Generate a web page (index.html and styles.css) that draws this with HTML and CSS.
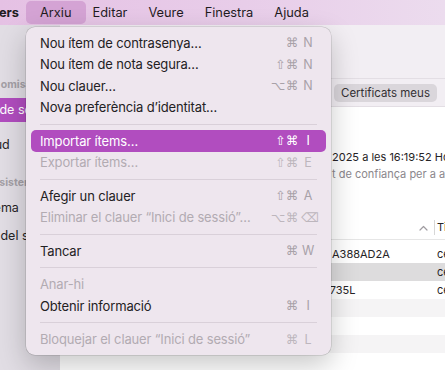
FILE: index.html
```html
<!DOCTYPE html>
<html lang="ca">
  <head>
    <meta charset="UTF-8" />
    <title>Accés a Clauers</title>
    <meta name="viewport" content="width=device-width, initial-scale=1" />
    <link rel="stylesheet" href="styles.css">
  </head>
  <body>
    <!-- System menu bar -->
    <div class="menubar">
      <div class="app-name"><span>Accés a Clauers</span></div>
      <span class="menu-title open">Arxiu</span>
      <span class="menu-title">Editar</span>
      <span class="menu-title">Veure</span>
      <span class="menu-title">Finestra</span>
      <span class="menu-title">Ajuda</span>
    </div>

    <!-- Keychain window behind the menu -->
    <div class="window">
      <aside class="sidebar">
        <div class="side-header">Clauers per omissió</div>
        <div class="side-item selected">Inici de sessió</div>
        <div class="side-item spaced">iCloud</div>
        <div class="side-header">Clauers del sistema</div>
        <div class="side-item">Sistema</div>
        <div class="side-item roots">Arrels del sistema</div>
      </aside>

      <main class="content">
        <div class="toolbar"></div>
        <div class="tabs">
          <span class="tab selected">Certificats meus</span>
          <span class="tab">Claus</span>
          <span class="tab">Certificats</span>
        </div>

        <div class="details">
          <div class="detail-line">2025 a les 16:19:52 Hora d’estiu del Centre d’Europa</div>
          <div class="detail-note">t de confiança per a aquest compte</div>
        </div>

        <div class="table">
          <div class="row head">
            <div class="cell-name">
              <svg class="sort" width="9" height="6" viewBox="0 0 9 6">
                <path d="M1 5 L4.5 1.5 L8 5" fill="none" stroke="#a09ca1" stroke-width="1.2" stroke-linecap="round" stroke-linejoin="round" />
              </svg>
            </div>
            <div class="cell-kind">Tipus</div>
          </div>
          <div class="table-body">
            <div class="row">
              <div class="cell-name">A388AD2A</div>
              <div class="cell-kind">certificat</div>
            </div>
            <div class="row selected">
              <div class="cell-name"></div>
              <div class="cell-kind">certificat</div>
            </div>
            <div class="row">
              <div class="cell-name shifted">2735L</div>
              <div class="cell-kind">certificat</div>
            </div>
            <div class="row"></div>
            <div class="row"></div>
            <div class="row"></div>
            <div class="row"></div>
          </div>
        </div>
      </main>
    </div>

    <!-- Open "Arxiu" menu -->
    <div class="menu">
      <div class="menu-item">
        <span class="label">Nou ítem de contrasenya…</span>
        <span class="keys"><span class="mods">⌘</span><span class="key">N</span></span>
      </div>
      <div class="menu-item">
        <span class="label">Nou ítem de nota segura…</span>
        <span class="keys"><span class="mods">⇧⌘</span><span class="key">N</span></span>
      </div>
      <div class="menu-item">
        <span class="label">Nou clauer…</span>
        <span class="keys"><span class="mods">⌥⌘</span><span class="key">N</span></span>
      </div>
      <div class="menu-item">
        <span class="label">Nova preferència d’identitat…</span>
      </div>
      <div class="separator"></div>
      <div class="menu-item active">
        <span class="label">Importar ítems…</span>
        <span class="keys"><span class="mods">⇧⌘</span><span class="key">I</span></span>
      </div>
      <div class="menu-item disabled">
        <span class="label">Exportar ítems…</span>
        <span class="keys"><span class="mods">⇧⌘</span><span class="key">E</span></span>
      </div>
      <div class="separator"></div>
      <div class="menu-item">
        <span class="label">Afegir un clauer</span>
        <span class="keys"><span class="mods">⇧⌘</span><span class="key">A</span></span>
      </div>
      <div class="menu-item disabled">
        <span class="label">Eliminar el clauer “Inici de sessió”…</span>
        <span class="keys"><span class="mods">⌥⌘</span><span class="key sym">⌫</span></span>
      </div>
      <div class="separator"></div>
      <div class="menu-item">
        <span class="label">Tancar</span>
        <span class="keys"><span class="mods">⌘</span><span class="key">W</span></span>
      </div>
      <div class="separator"></div>
      <div class="menu-item disabled">
        <span class="label">Anar-hi</span>
      </div>
      <div class="menu-item">
        <span class="label">Obtenir informació</span>
        <span class="keys"><span class="mods">⌘</span><span class="key">I</span></span>
      </div>
      <div class="separator"></div>
      <div class="menu-item disabled">
        <span class="label">Bloquejar el clauer “Inici de sessió”</span>
        <span class="keys"><span class="mods">⌘</span><span class="key">L</span></span>
      </div>
    </div>
  </body>
</html>
```

FILE: styles.css
```css
/* macOS-like menu over Keychain Access */
body {
  margin: 0;
  width: 445px;
  height: 370px;
  overflow: hidden;
  font-family: "Inter", "Noto Sans", sans-serif;
  background: #fff;
  color: #232123;
  position: relative;
}

/* menu bar */
.menubar {
  display: flex;
  align-items: center;
  height: 25px;
  font-size: 12.8px;
  color: #1f1c1f;
  background: linear-gradient(90deg, #e5c1e4, #e8cde9 55%, #ecdcee);
  white-space: nowrap;
}
.app-name {
  width: 19px;
  margin-right: 7px;
  display: flex;
  justify-content: flex-end;
  font-weight: 700;
}
.app-name span {
  flex-shrink: 0;
}
.menu-title {
  padding: 0 14px;
  margin: 0 -3.5px;
  line-height: 23px;
  border-radius: 5px;
}
.menu-title.open {
  margin-left: 0;
  background: #d4a3d4;
}

/* window */
.window {
  display: flex;
  height: 345px;
}
.sidebar {
  flex: 0 0 140px;
  margin-left: -80px;
  padding-top: 47px;
  background: #e1dde4;
  white-space: nowrap;
  overflow: hidden;
}
.side-header {
  height: 20px;
  padding: 3px 0 0 19px;
  line-height: 20px;
  font-size: 10.5px;
  font-weight: 700;
  color: #a4a0a6;
  margin-top: 13px;
}
.side-header:first-child {
  margin-top: 0;
}
.side-item {
  height: 24px;
  line-height: 24px;
  margin: 4px 8px 0;
  padding-left: 44px;
  font-size: 12.5px;
  color: #262426;
  border-radius: 6px;
}
.side-header + .side-item {
  margin-top: 3px;
}
.side-item.spaced {
  margin-top: 11px;
}
.side-item.roots {
  padding-left: 34px;
}
.side-item.selected {
  background: #b14dbf;
  color: #fff;
}

.content {
  flex: 1;
  min-width: 0;
  overflow: hidden;
  background: #fff;
}
.toolbar {
  height: 53px;
  background: #f2eef3;
  border-bottom: 1px solid #e3dee4;
}
.tabs {
  display: flex;
  align-items: center;
  gap: 1px;
  height: 27px;
  padding-left: 274px;
  background: #f2eef3;
  border-bottom: 1px solid #e3dee4;
  font-size: 11.5px;
  color: #333033;
  white-space: nowrap;
}
.tab {
  flex-shrink: 0;
  padding: 0 7px;
  height: 18px;
  line-height: 18px;
  border-radius: 5px;
}
.tab.selected {
  background: #dad6db;
}

.details {
  padding: 42px 0 0 272px;
  font-size: 11px;
  line-height: 17px;
  white-space: nowrap;
}
.detail-line {
  color: #252325;
}
.detail-note {
  color: #8b878c;
}

.table {
  margin-top: 33px;
  font-size: 11px;
  color: #262426;
  white-space: nowrap;
}
.row {
  display: grid;
  grid-template-columns: 374px auto;
  height: 18px;
  line-height: 18px;
}
.row.head {
  height: 23px;
  align-items: center;
  border-bottom: 1px solid #e6e6e6;
}
.row.head .cell-name {
  display: flex;
  justify-content: flex-end;
  padding-right: 6px;
}
.row.head .cell-kind {
  height: 15px;
  line-height: 15px;
  border-left: 1px solid #d7d7d7;
  padding-left: 2px;
}
.table-body {
  padding-top: 5px;
}
.table-body .row:nth-child(even) {
  background: #f5f4f5;
}
.table-body .row.selected {
  background: #dddcdd;
}
.cell-name {
  padding-left: 272px;
}
.cell-name.shifted {
  padding-left: 263px;
}
.cell-kind {
  padding-left: 3px;
}

/* dropdown menu */
.menu {
  position: absolute;
  top: 27px;
  left: 26px;
  width: 305px;
  box-sizing: border-box;
  padding: 5px;
  background: #eee6ee;
  border-radius: 9px;
  box-shadow: 0 0 0 0.5px rgba(0, 0, 0, 0.18), 0 10px 28px rgba(0, 0, 0, 0.22);
  font-size: 13px;
  letter-spacing: -0.15px;
  z-index: 10;
}
.menu-item {
  display: flex;
  align-items: center;
  justify-content: space-between;
  height: 21.5px;
  padding: 0 11px 0 9px;
  border-radius: 5px;
  white-space: nowrap;
}
.menu-item.active {
  background: #b14dbf;
  color: #fff;
}
.menu-item.disabled .label {
  color: #b2abb2;
}
.keys {
  display: flex;
  align-items: center;
  color: #a8a1a8;
}
.menu-item.disabled .keys {
  color: #bdb6bd;
}
.menu-item.active .keys {
  color: #fff;
}
.mods {
  font-family: "DejaVu Sans", sans-serif;
  font-size: 12.5px;
  letter-spacing: 0.5px;
}
.key {
  width: 14px;
  margin-left: 2px;
  text-align: center;
  font-size: 12.5px;
}
.key.sym {
  font-family: "DejaVu Sans", sans-serif;
  font-size: 12.5px;
}
.separator {
  height: 1px;
  margin: 5.5px 9px;
  background: #d9d0d9;
}
```
